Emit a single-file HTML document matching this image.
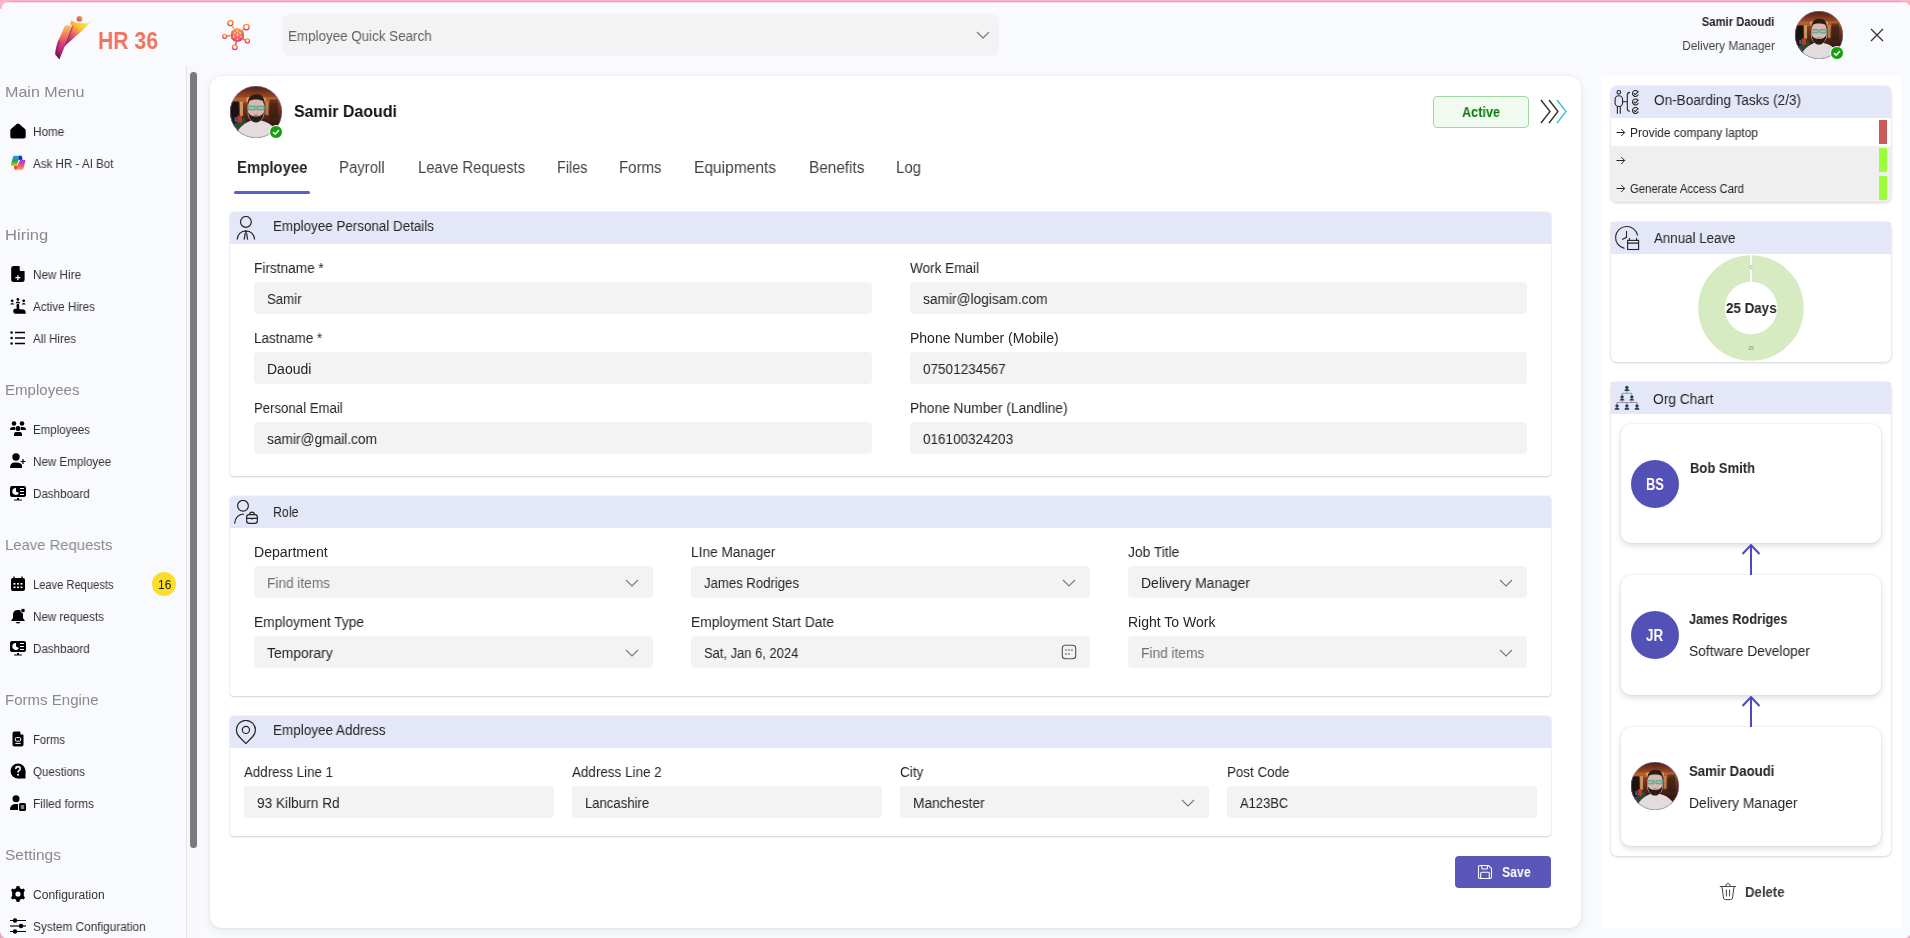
<!DOCTYPE html><html><head><meta charset="utf-8"><style>
*{box-sizing:border-box;margin:0;padding:0}
html,body{width:1910px;height:938px;overflow:hidden;background:#f9fafe;font-family:"Liberation Sans",sans-serif}
.a{position:absolute}
.t{position:absolute;white-space:nowrap;will-change:transform}

#t0{transform:scaleX(0.8819)}
#t1{transform:scaleX(0.9561)}
#t2{transform:scaleX(0.9385)}
#t3{transform:scaleX(0.9867)}
#t4{transform:scaleX(1.0714)}
#t5{transform:scaleX(1.1049)}
#t6{transform:scaleX(1.0027)}
#t7{transform:scaleX(0.9898)}
#t8{transform:scaleX(1.0024)}
#t9{transform:scaleX(1.0313)}
#t10{transform:scaleX(0.9776)}
#t11{transform:scaleX(0.9657)}
#t12{transform:scaleX(0.9728)}
#t13{transform:scaleX(0.9685)}
#t14{transform:scaleX(0.9626)}
#t15{transform:scaleX(0.9600)}
#t16{transform:scaleX(0.9690)}
#t17{transform:scaleX(0.9673)}
#t18{transform:scaleX(0.9281)}
#t19{transform:scaleX(0.9676)}
#t20{transform:scaleX(0.9673)}
#t21{transform:scaleX(0.9412)}
#t22{transform:scaleX(0.9624)}
#t23{transform:scaleX(0.9836)}
#t24{transform:scaleX(1.0043)}
#t25{transform:scaleX(0.9831)}
#t26{transform:scaleX(0.9731)}
#t27{transform:scaleX(0.9398)}
#t28{transform:scaleX(0.9041)}
#t29{transform:scaleX(0.9313)}
#t30{transform:scaleX(0.9344)}
#t31{transform:scaleX(0.9253)}
#t32{transform:scaleX(0.8999)}
#t33{transform:scaleX(0.9376)}
#t34{transform:scaleX(0.9704)}
#t35{transform:scaleX(0.9600)}
#t36{transform:scaleX(0.9362)}
#t37{transform:scaleX(0.9578)}
#t38{transform:scaleX(0.9752)}
#t39{transform:scaleX(0.9463)}
#t40{transform:scaleX(0.9643)}
#t41{transform:scaleX(0.9961)}
#t42{transform:scaleX(0.9410)}
#t43{transform:scaleX(0.9801)}
#t44{transform:scaleX(0.9676)}
#t45{transform:scaleX(0.9810)}
#t46{transform:scaleX(0.9992)}
#t47{transform:scaleX(0.9667)}
#t48{transform:scaleX(0.9830)}
#t49{transform:scaleX(0.9643)}
#t50{transform:scaleX(0.8855)}
#t51{transform:scaleX(1.0074)}
#t52{transform:scaleX(0.9756)}
#t53{transform:scaleX(0.9768)}
#t54{transform:scaleX(0.9391)}
#t55{transform:scaleX(0.9858)}
#t56{transform:scaleX(0.9934)}
#t57{transform:scaleX(0.9839)}
#t58{transform:scaleX(0.9918)}
#t59{transform:scaleX(0.9880)}
#t60{transform:scaleX(0.9248)}
#t61{transform:scaleX(0.9988)}
#t62{transform:scaleX(0.9802)}
#t63{transform:scaleX(0.9637)}
#t64{transform:scaleX(0.9528)}
#t65{transform:scaleX(0.9737)}
#t66{transform:scaleX(0.9603)}
#t67{transform:scaleX(0.9358)}
#t68{transform:scaleX(0.9699)}
#t69{transform:scaleX(0.9787)}
#t70{transform:scaleX(0.9560)}
#t71{transform:scaleX(0.9241)}
#t72{transform:scaleX(0.8776)}
#t73{transform:scaleX(0.9704)}
#t74{transform:scaleX(0.9942)}
#t75{transform:scaleX(0.9442)}
#t76{transform:scaleX(0.9517)}
#t77{transform:scaleX(0.9558)}
#t78{transform:scaleX(0.9842)}
#t79{transform:scaleX(0.8006)}
#t80{transform:scaleX(0.9286)}
#t81{transform:scaleX(0.8312)}
#t82{transform:scaleX(0.9106)}
#t83{transform:scaleX(0.9841)}
#t84{transform:scaleX(0.9474)}
#t85{transform:scaleX(0.9889)}
#t86{transform:scaleX(0.9398)}
</style></head><body>
<div class="a" style="left:0;top:0;width:1910px;height:3px;background:linear-gradient(to bottom,#ffb3c9 0,#ffb3c9 1.4px,#dc9cb2 1.4px,#f2c6d6 2.4px,transparent 2.6px)"></div>
<svg class="a" style="left:0;top:0" width="10" height="10"><path d="M0 0 L10 0 L10 1.5 Q2 1.5 1.5 9 L0 9Z" fill="#ffb3c9"/></svg>
<svg class="a" style="left:1906px;top:934px" width="4" height="4"><path d="M4 0 L4 4 L0 4 Q2.5 3.5 4 1Z" fill="#e8a0b8"/></svg>
<svg class="a" style="left:0;top:926px" width="8" height="12"><path d="M0 6 Q1.5 10 4.5 12 L0 12Z" fill="#f0a8c0"/></svg>
<svg class="a" style="left:1900px;top:0" width="10" height="10"><path d="M10 0 L0 0 L0 1.5 Q8 1.5 8.5 5 L10 5Z" fill="#ffb3c9"/></svg>
<svg class="a" style="left:52px;top:14px;" width="42" height="50" viewBox="0 0 42 50"><defs><linearGradient id="lg1" gradientUnits="userSpaceOnUse" x1="10" y1="11" x2="8" y2="46"><stop offset="0" stop-color="#f9c46a"/><stop offset="0.3" stop-color="#f17a52"/><stop offset="0.5" stop-color="#e5407a"/><stop offset="0.75" stop-color="#b02878"/><stop offset="1" stop-color="#5e1452"/></linearGradient>
<linearGradient id="lg2" gradientUnits="userSpaceOnUse" x1="37" y1="8" x2="14" y2="31"><stop offset="0" stop-color="#fdf23a"/><stop offset="0.35" stop-color="#fbbf30"/><stop offset="0.65" stop-color="#e85072"/><stop offset="1" stop-color="#8a1a68"/></linearGradient>
<linearGradient id="lg3" x1="1" y1="0" x2="0" y2="1"><stop offset="0" stop-color="#f8b030"/><stop offset="1" stop-color="#d83080"/></linearGradient></defs>
<path d="M18.1 10.1 L19.5 5.9 C22 8.5 28 10 37.9 8.8 C33 14 28 19 12.8 32 L20.3 12 Z" fill="url(#lg2)"/>
<path d="M7.5 45.6 L3.2 40.5 C3.5 34 6 26 13.3 11.2 L20.3 12 C17 20 14.5 26 12.8 32 C11 37 9 41 7.5 45.6 Z" fill="url(#lg1)"/>
<path d="M3.2 40.5 C3.5 34 5 29 6.5 25 L8 28 C6.5 33 5.5 38 7.5 45.6Z" fill="#5a1048" opacity=".35"/>
<path d="M20.5 12.5 L12.8 32" stroke="#5a1040" stroke-width=".8" opacity=".8"/>
<circle cx="27.5" cy="4.8" r="2.9" fill="url(#lg3)"/></svg>
<div class="t" id="t0" style="left:98px;top:28.68px;font-size:24px;line-height:24px;font-weight:700;color:#f0735f;transform-origin:left center;">HR 36</div>
<svg class="a" style="left:218px;top:16px;" width="38" height="38" viewBox="0 0 38 38"><defs><linearGradient id="ai1" x1="0" y1="0" x2="0" y2="1"><stop offset="0" stop-color="#f4a030"/><stop offset="1" stop-color="#e8306a"/></linearGradient></defs>
<g fill="none" stroke="url(#ai1)" stroke-width="1.3"><circle cx="12.4" cy="7.1" r="2.6"/><circle cx="28.4" cy="11.1" r="2.7"/><circle cx="6.7" cy="20.3" r="2"/><circle cx="29.4" cy="24.9" r="2"/><circle cx="16.8" cy="31.2" r="2.3"/>
<path d="M14 9.5 L16 13 M26.3 13 L24 14.5 M8.7 20.1 L12.5 19.6 M27.5 24.3 L25.3 23.2 M17.6 28.9 L18.2 25.8"/></g>
<path d="M19.4 12 L22.5 13.3 L25.6 15.5 L26.2 19 L25.6 22.5 L23 25 L19.4 26 L15.8 25 L13.2 22.5 L12.6 19 L13.2 15.5 L16.3 13.3Z" fill="url(#ai1)"/>
<g fill="#fde8e8" opacity=".85"><circle cx="19.4" cy="14.5" r=".7"/><circle cx="16.5" cy="17" r=".7"/><circle cx="22.3" cy="17" r=".7"/><circle cx="19.4" cy="19" r=".7"/><circle cx="15.5" cy="21" r=".7"/><circle cx="23.3" cy="21" r=".7"/><circle cx="19.4" cy="23.5" r=".7"/></g>
<path d="M16.5 17 L19.4 19 L22.3 17 M15.5 21 L19.4 19 L23.3 21 M19.4 14.5 L19.4 23.5 M16.5 17 L15.5 21 L19.4 23.5 L23.3 21 L22.3 17 L19.4 14.5Z" fill="none" stroke="#fde8e8" stroke-width=".5" opacity=".7"/></svg>
<div class="a" style="left:282px;top:14px;width:717px;height:42px;background:#f3f3f3;border-radius:8px"></div>
<div class="t" id="t1" style="left:288px;top:29.45px;font-size:14px;line-height:14px;font-weight:400;color:#616161;transform-origin:left center;">Employee Quick Search</div>
<svg class="a" style="left:976px;top:31px;" width="14" height="9" viewBox="0 0 14 9"><path d="M1 1 L7 7 L13 1" fill="none" stroke="#808080" stroke-width="1.3"/></svg>
<div class="t" id="t2" style="right:135.5999999999999px;top:15.74px;font-size:12px;line-height:12px;font-weight:700;color:#242424;transform-origin:right center;">Samir Daoudi</div>
<div class="t" id="t3" style="right:135.29999999999995px;top:39.84px;font-size:12px;line-height:12px;font-weight:400;color:#424242;transform-origin:right center;">Delivery Manager</div>
<svg class="a" style="left:1795px;top:11px;" width="48" height="48" viewBox="0 0 100 100"><defs><clipPath id="cph"><circle cx="50" cy="50" r="50"/></clipPath>
<linearGradient id="bgh" x1="0" y1="0" x2="0" y2="1"><stop offset="0" stop-color="#4a1c14"/><stop offset="0.22" stop-color="#a04a22"/><stop offset="0.4" stop-color="#7a3418"/><stop offset="0.7" stop-color="#3a1a12"/><stop offset="1" stop-color="#2a1410"/></linearGradient></defs>
<g clip-path="url(#cph)"><rect width="100" height="100" fill="url(#bgh)"/>
<rect x="0" y="22" width="100" height="10" fill="#d08040" opacity=".45"/>
<rect x="0" y="30" width="17" height="60" fill="#1e1210"/><rect x="19" y="30" width="6" height="28" fill="#f0c080" opacity=".7"/><rect x="68" y="30" width="6" height="26" fill="#e8b070" opacity=".6"/><rect x="76" y="26" width="16" height="36" fill="#2a1a12" opacity=".6"/><circle cx="36" cy="26" r="5" fill="#f8d890" opacity=".5"/><circle cx="64" cy="26" r="5" fill="#f8d890" opacity=".5"/>
<path d="M4 76 L28 60 L36 84 L12 98Z" fill="#2a4834"/><rect x="14" y="57" width="9" height="13" fill="#c03a22"/><rect x="9" y="60" width="4" height="9" fill="#3a6a9a"/>
<path d="M10 100 C14 80 30 70 42 66 L58 66 C72 69 88 76 94 100Z" fill="#e2dcdc"/>
<path d="M34 38 C34 26 40 22 50 22 C60 22 66 26 66 38 L66 52 C66 62 58 70 50 70 C42 70 34 62 34 52Z" fill="#d9b8ae"/>
<path d="M34.5 38 C33 21 42 16 51 16 C61 16 68 22 66 38 L63.5 29 C58 25 42 25 37 29Z" fill="#2a1c18"/>
<path d="M35 50 C35 62 42 70 50 70 C58 70 65 62 65 50 C63 56 57 58.5 50 58.5 C43 58.5 37 56 35 50Z" fill="#2a1c18"/>
<path d="M34 39 L48 39 L48 45.5 L35 45.5Z M52 39 L66 39 L65 45.5 L52 45.5Z" fill="#5ab8a0" fill-opacity=".3" stroke="#3aa890" stroke-width="2"/>
<ellipse cx="50" cy="56" rx="5" ry="1.5" fill="#b87878"/>
</g><circle cx="50" cy="50" r="49.3" fill="none" stroke="#8a80d0" stroke-width="1"/></svg>
<svg class="a" style="left:1830px;top:46px;" width="14" height="14" viewBox="0 0 14 14"><circle cx="7" cy="7" r="6.5" fill="#13a10e" stroke="#fff" stroke-width="1"/><path d="M4 7.2 L6.2 9.2 L10 5" fill="none" stroke="#fff" stroke-width="1.6"/></svg>
<svg class="a" style="left:1870px;top:28px;" width="14" height="14" viewBox="0 0 14 14"><path d="M1 1 L13 13 M13 1 L1 13" stroke="#333" stroke-width="1.3"/></svg>
<div class="a" style="left:186px;top:66px;width:14px;height:872px;background:#f8f8f8;border-left:1px solid #e4e4e4"></div>
<div class="a" style="left:190px;top:72px;width:7px;height:776px;background:#7a7a7a;border-radius:4px"></div>
<div class="t" id="t4" style="left:5px;top:84.10px;font-size:15px;line-height:15px;font-weight:400;color:#8a8a8a;transform-origin:left center;">Main Menu</div>
<div class="t" id="t5" style="left:5px;top:227.40px;font-size:15px;line-height:15px;font-weight:400;color:#8a8a8a;transform-origin:left center;">Hiring</div>
<div class="t" id="t6" style="left:5px;top:382.30px;font-size:15px;line-height:15px;font-weight:400;color:#8a8a8a;transform-origin:left center;">Employees</div>
<div class="t" id="t7" style="left:5px;top:537.20px;font-size:15px;line-height:15px;font-weight:400;color:#8a8a8a;transform-origin:left center;">Leave Requests</div>
<div class="t" id="t8" style="left:5px;top:692.30px;font-size:15px;line-height:15px;font-weight:400;color:#8a8a8a;transform-origin:left center;">Forms Engine</div>
<div class="t" id="t9" style="left:5px;top:847.00px;font-size:15px;line-height:15px;font-weight:400;color:#8a8a8a;transform-origin:left center;">Settings</div>
<div class="t" id="t10" style="left:32.5px;top:125.84px;font-size:12px;line-height:12px;font-weight:400;color:#333333;transform-origin:left center;">Home</div>
<svg class="a" style="left:10px;top:123px;fill:#000" width="16" height="16" viewBox="0 0 16 16"><path d="M8 0.6 Q8.7 0.6 9.3 1.1 L15 5.9 Q15.7 6.5 15.7 7.4 L15.7 13.8 Q15.7 15.6 13.9 15.6 L2.1 15.6 Q0.3 15.6 0.3 13.8 L0.3 7.4 Q0.3 6.5 1 5.9 L6.7 1.1 Q7.3 0.6 8 0.6Z" fill="#000"/></svg>
<div class="t" id="t11" style="left:32.5px;top:157.84px;font-size:12px;line-height:12px;font-weight:400;color:#333333;transform-origin:left center;">Ask HR - AI Bot</div>
<svg class="a" style="left:10px;top:155px;fill:#000" width="16" height="16" viewBox="0 0 16 16"><defs><linearGradient id="cpl1" x1="0" y1="0" x2="0" y2="1"><stop offset="0" stop-color="#2a98f0"/><stop offset="0.55" stop-color="#28a050"/><stop offset="1" stop-color="#f0c818"/></linearGradient><linearGradient id="cpl2" x1="0" y1="0" x2="0" y2="1"><stop offset="0" stop-color="#9a3ee0"/><stop offset="0.5" stop-color="#e84a80"/><stop offset="1" stop-color="#f8a050"/></linearGradient></defs><path d="M4 0.8 L10.5 0.8 Q11.6 0.8 12 2 L12.4 4.8 L8.6 4.8 L6.6 10.9 L1.6 10.9 Q0.7 10.9 0.9 10 L3 2 Q3.3 0.8 4 0.8Z" fill="url(#cpl1)"/><path d="M9 0.8 L10.5 0.8 Q11.6 0.8 12 2 L12.4 4.8 L8.6 4.8Z" fill="#2424c8"/><path d="M10 5 L14.6 5 Q15.6 5 15.4 6 L13.3 14 Q13 14.8 12 14.8 L5.6 14.8 Q4.8 14.8 4.6 14 L4 10.9 L7.2 10.9 Z" fill="url(#cpl2)"/><path d="M4 10.9 L7.2 10.9 L6.2 14.8 L5.6 14.8 Q4.8 14.8 4.6 14Z" fill="#f04a20"/></svg>
<div class="t" id="t12" style="left:32.5px;top:268.84px;font-size:12px;line-height:12px;font-weight:400;color:#333333;transform-origin:left center;">New Hire</div>
<svg class="a" style="left:10px;top:266px;fill:#000" width="16" height="16" viewBox="0 0 16 16"><path d="M3.7 0 L9.2 0 L14.6 5.4 L14.6 13.4 Q14.6 15.9 12.1 15.9 L3.7 15.9 Q1.2 15.9 1.2 13.4 L1.2 2.5 Q1.2 0 3.7 0Z" fill="#000"/><path d="M9.7 0.3 L9.7 3.4 Q9.7 4.9 11.2 4.9 L14.3 4.9Z" fill="#fff"/><path d="M7.9 9.2 L7.9 14.2 M5.4 11.7 L10.4 11.7" stroke="#fff" stroke-width="1.3"/></svg>
<div class="t" id="t13" style="left:32.5px;top:300.84px;font-size:12px;line-height:12px;font-weight:400;color:#333333;transform-origin:left center;">Active Hires</div>
<svg class="a" style="left:10px;top:298px;fill:#000" width="16" height="16" viewBox="0 0 16 16"><circle cx="2.2" cy="2.8" r="1.4"/><circle cx="7.9" cy="1.4" r="1.4"/><circle cx="13.7" cy="2.8" r="1.4"/><path d="M0.3 6.6 Q0.3 4.9 2.2 4.9 Q4.1 4.9 4.1 6.6Z M11.8 6.6 Q11.8 4.9 13.7 4.9 Q15.6 4.9 15.6 6.6Z M5.6 5.2 Q5.6 3.5 7.9 3.5 Q10.2 3.5 10.2 5.2Z"/><rect x="6.7" y="5.6" width="2.4" height="7.5" rx="1.2" stroke="#f9fafe" stroke-width=".6"/><path d="M3.3 12.6 Q3.3 10.8 5.2 10.8 L13.5 11.6 Q15.6 12 15.6 14 L15.6 15.8 L5.5 15.8 Q3.3 15.8 3.3 13.6Z"/><rect x="6.7" y="6" width="2.4" height="7" rx="1.2"/></svg>
<div class="t" id="t14" style="left:32.5px;top:332.84px;font-size:12px;line-height:12px;font-weight:400;color:#333333;transform-origin:left center;">All Hires</div>
<svg class="a" style="left:10px;top:330px;fill:#000" width="16" height="16" viewBox="0 0 16 16"><circle cx="1.6" cy="2.5" r="1.3"/><circle cx="1.6" cy="8" r="1.3"/><circle cx="1.6" cy="13.5" r="1.3"/><path d="M5 2.5 L15 2.5 M5 8 L15 8 M5 13.5 L15 13.5" stroke="#000" stroke-width="1.4"/></svg>
<div class="t" id="t15" style="left:32.5px;top:423.84px;font-size:12px;line-height:12px;font-weight:400;color:#333333;transform-origin:left center;">Employees</div>
<svg class="a" style="left:10px;top:421px;fill:#000" width="16" height="16" viewBox="0 0 16 16"><circle cx="4" cy="2.5" r="2.3"/><circle cx="12" cy="2.5" r="2.3"/><circle cx="8" cy="7.5" r="2.5"/><path d="M0 9 Q0 6 3 6 L5 6 L5 9Z M11 6 L13 6 Q16 6 16 9 L11 9Z"/><path d="M4 15 L4 13 Q4 11 6 11 L10 11 Q12 11 12 13 L12 15Z"/></svg>
<div class="t" id="t16" style="left:32.5px;top:455.84px;font-size:12px;line-height:12px;font-weight:400;color:#333333;transform-origin:left center;">New Employee</div>
<svg class="a" style="left:10px;top:453px;fill:#000" width="16" height="16" viewBox="0 0 16 16"><circle cx="6" cy="4" r="3.7"/><path d="M0 15 Q0 10 4 9.5 L8 9.5 Q11 10 12 12 L12 15Z"/><path d="M13 6 L13 11 M10.5 8.5 L15.5 8.5" stroke="#000" stroke-width="1.2"/></svg>
<div class="t" id="t17" style="left:32.5px;top:487.84px;font-size:12px;line-height:12px;font-weight:400;color:#333333;transform-origin:left center;">Dashboard</div>
<svg class="a" style="left:10px;top:485px;fill:#000" width="16" height="16" viewBox="0 0 16 16"><rect x="0" y="1" width="16" height="11" rx="2"/><path d="M7 13 L9 13 L9 14.5 L12 14.5 L12 15.5 L4 15.5 L4 14.5 L7 14.5Z"/><path d="M6 3 A3.5 3.5 0 1 0 9 8 L6 6.5Z" fill="#fff"/><path d="M10 3.5 L14 3.5 M10 6.5 L14 6.5 M10 9.5 L14 9.5" stroke="#fff" stroke-width="1.2"/></svg>
<div class="t" id="t18" style="left:32.5px;top:578.84px;font-size:12px;line-height:12px;font-weight:400;color:#333333;transform-origin:left center;">Leave Requests</div>
<svg class="a" style="left:10px;top:576px;fill:#000" width="16" height="16" viewBox="0 0 16 16"><rect x="1" y="2" width="14" height="13" rx="2"/><path d="M4 0.5 L4 3 M12 0.5 L12 3" stroke="#000" stroke-width="1.4"/><g fill="#fff"><rect x="3.5" y="7" width="2" height="1.6"/><rect x="7" y="7" width="2" height="1.6"/><rect x="10.5" y="7" width="2" height="1.6"/><rect x="3.5" y="10.5" width="2" height="1.6"/><rect x="7" y="10.5" width="2" height="1.6"/><rect x="10.5" y="10.5" width="2" height="1.6"/></g></svg>
<div class="t" id="t19" style="left:32.5px;top:610.84px;font-size:12px;line-height:12px;font-weight:400;color:#333333;transform-origin:left center;">New requests</div>
<svg class="a" style="left:10px;top:608px;fill:#000" width="16" height="16" viewBox="0 0 16 16"><path d="M8 2 Q3 2 3 7 L3 10 L1 13 L15 13 L13 10 L13 7 Q13 2 8 2Z"/><path d="M5.5 14 Q8 17 10.5 14Z"/><circle cx="13" cy="2.5" r="2.2" stroke="#f9f9fe" stroke-width="0.8"/></svg>
<div class="t" id="t20" style="left:32.5px;top:642.84px;font-size:12px;line-height:12px;font-weight:400;color:#333333;transform-origin:left center;">Dashbaord</div>
<svg class="a" style="left:10px;top:640px;fill:#000" width="16" height="16" viewBox="0 0 16 16"><rect x="0" y="1" width="16" height="11" rx="2"/><path d="M7 13 L9 13 L9 14.5 L12 14.5 L12 15.5 L4 15.5 L4 14.5 L7 14.5Z"/><path d="M6 3 A3.5 3.5 0 1 0 9 8 L6 6.5Z" fill="#fff"/><path d="M10 3.5 L14 3.5 M10 6.5 L14 6.5 M10 9.5 L14 9.5" stroke="#fff" stroke-width="1.2"/></svg>
<div class="t" id="t21" style="left:32.5px;top:733.84px;font-size:12px;line-height:12px;font-weight:400;color:#333333;transform-origin:left center;">Forms</div>
<svg class="a" style="left:10px;top:731px;fill:#000" width="16" height="16" viewBox="0 0 16 16"><path d="M4.5 0.5 L10 0.5 L13.5 4 L13.5 13.5 Q13.5 15.5 11.5 15.5 L4.5 15.5 Q2.5 15.5 2.5 13.5 L2.5 2.5 Q2.5 0.5 4.5 0.5Z"/><path d="M10.4 0.6 L10.4 2.6 Q10.4 3.6 11.4 3.6 L13.4 3.6Z" fill="#fff"/><rect x="5.3" y="6.6" width="5.4" height="3.6" rx="1.2" fill="none" stroke="#fff" stroke-width="1"/><path d="M5.3 12.4 L10.7 12.4" stroke="#fff" stroke-width="1"/></svg>
<div class="t" id="t22" style="left:32.5px;top:765.84px;font-size:12px;line-height:12px;font-weight:400;color:#333333;transform-origin:left center;">Questions</div>
<svg class="a" style="left:10px;top:763px;fill:#000" width="16" height="16" viewBox="0 0 16 16"><circle cx="8" cy="8" r="7.5"/><rect x="8" y="8" width="7.5" height="7.5"/><path d="M5.8 6 Q5.8 3.6 8 3.6 Q10.2 3.6 10.2 5.7 Q10.2 7 8.8 7.7 Q8 8.2 8 9.5" fill="none" stroke="#fff" stroke-width="1.6"/><circle cx="8" cy="11.8" r="1" fill="#fff"/></svg>
<div class="t" id="t23" style="left:32.5px;top:797.84px;font-size:12px;line-height:12px;font-weight:400;color:#333333;transform-origin:left center;">Filled forms</div>
<svg class="a" style="left:10px;top:795px;fill:#000" width="16" height="16" viewBox="0 0 16 16"><circle cx="6" cy="3.8" r="3.5"/><path d="M0 15 Q0 9.5 5 9 L8 9 L8 15Z"/><rect x="9" y="8" width="7" height="8" rx="1.5"/><path d="M10.8 11 L14.2 11 M10.8 13 L14.2 13" stroke="#fff" stroke-width="1"/></svg>
<div class="t" id="t24" style="left:32.5px;top:888.84px;font-size:12px;line-height:12px;font-weight:400;color:#333333;transform-origin:left center;">Configuration</div>
<svg class="a" style="left:10px;top:886px;fill:#000" width="16" height="16" viewBox="0 0 16 16"><path d="M8 0 L9.5 0.3 L10 2.2 L11.8 3.2 L13.7 2.6 L15 4.5 L13.8 6 L13.8 10 L15 11.5 L13.7 13.4 L11.8 12.8 L10 13.8 L9.5 15.7 L8 16 L6.5 15.7 L6 13.8 L4.2 12.8 L2.3 13.4 L1 11.5 L2.2 10 L2.2 6 L1 4.5 L2.3 2.6 L4.2 3.2 L6 2.2 L6.5 0.3Z"/><circle cx="8" cy="8" r="2.6" fill="#fff"/></svg>
<div class="t" id="t25" style="left:32.5px;top:920.84px;font-size:12px;line-height:12px;font-weight:400;color:#333333;transform-origin:left center;">System Configuration</div>
<svg class="a" style="left:10px;top:918px;fill:#000" width="16" height="16" viewBox="0 0 16 16"><path d="M0 2.5 L16 2.5 M0 13.5 L16 13.5" stroke="#000" stroke-width="1.2"/><path d="M0 8 L16 8" stroke="#444" stroke-width="1.6"/><circle cx="5" cy="2.5" r="2.2"/><circle cx="11" cy="8" r="2.2"/><circle cx="5" cy="13.5" r="2.2"/></svg>
<div class="a" style="left:152px;top:572px;width:24px;height:24px;background:#fade2a;border-radius:50%"></div>
<div class="t" id="t26" style="left:157.5px;top:578.84px;font-size:12px;line-height:12px;font-weight:400;color:#242424;transform-origin:left center;">16</div>
<div class="a" style="left:210px;top:76px;width:1371px;height:852px;background:#fff;border-radius:12px;box-shadow:0 0 2px rgba(0,0,0,.10),0 3px 10px rgba(0,0,0,.08)"></div>
<svg class="a" style="left:230px;top:86px;" width="52" height="52" viewBox="0 0 100 100"><defs><clipPath id="cpm"><circle cx="50" cy="50" r="50"/></clipPath>
<linearGradient id="bgm" x1="0" y1="0" x2="0" y2="1"><stop offset="0" stop-color="#4a1c14"/><stop offset="0.22" stop-color="#a04a22"/><stop offset="0.4" stop-color="#7a3418"/><stop offset="0.7" stop-color="#3a1a12"/><stop offset="1" stop-color="#2a1410"/></linearGradient></defs>
<g clip-path="url(#cpm)"><rect width="100" height="100" fill="url(#bgm)"/>
<rect x="0" y="22" width="100" height="10" fill="#d08040" opacity=".45"/>
<rect x="0" y="30" width="17" height="60" fill="#1e1210"/><rect x="19" y="30" width="6" height="28" fill="#f0c080" opacity=".7"/><rect x="68" y="30" width="6" height="26" fill="#e8b070" opacity=".6"/><rect x="76" y="26" width="16" height="36" fill="#2a1a12" opacity=".6"/><circle cx="36" cy="26" r="5" fill="#f8d890" opacity=".5"/><circle cx="64" cy="26" r="5" fill="#f8d890" opacity=".5"/>
<path d="M4 76 L28 60 L36 84 L12 98Z" fill="#2a4834"/><rect x="14" y="57" width="9" height="13" fill="#c03a22"/><rect x="9" y="60" width="4" height="9" fill="#3a6a9a"/>
<path d="M10 100 C14 80 30 70 42 66 L58 66 C72 69 88 76 94 100Z" fill="#e2dcdc"/>
<path d="M34 38 C34 26 40 22 50 22 C60 22 66 26 66 38 L66 52 C66 62 58 70 50 70 C42 70 34 62 34 52Z" fill="#d9b8ae"/>
<path d="M34.5 38 C33 21 42 16 51 16 C61 16 68 22 66 38 L63.5 29 C58 25 42 25 37 29Z" fill="#2a1c18"/>
<path d="M35 50 C35 62 42 70 50 70 C58 70 65 62 65 50 C63 56 57 58.5 50 58.5 C43 58.5 37 56 35 50Z" fill="#2a1c18"/>
<path d="M34 39 L48 39 L48 45.5 L35 45.5Z M52 39 L66 39 L65 45.5 L52 45.5Z" fill="#5ab8a0" fill-opacity=".3" stroke="#3aa890" stroke-width="2"/>
<ellipse cx="50" cy="56" rx="5" ry="1.5" fill="#b87878"/>
</g><circle cx="50" cy="50" r="49.3" fill="none" stroke="#8a80d0" stroke-width="1"/></svg>
<svg class="a" style="left:269px;top:125px;" width="14" height="14" viewBox="0 0 14 14"><circle cx="7" cy="7" r="6.5" fill="#13a10e" stroke="#fff" stroke-width="1"/><path d="M4 7.2 L6.2 9.2 L10 5" fill="none" stroke="#fff" stroke-width="1.6"/></svg>
<div class="t" id="t27" style="left:293.6px;top:102.61px;font-size:17px;line-height:17px;font-weight:700;color:#111;transform-origin:left center;">Samir Daoudi</div>
<div class="a" style="left:1433px;top:96px;width:96px;height:32px;background:#f1faf1;border:1px solid #9fd89f;border-radius:4px"></div>
<div class="t" id="t28" style="left:1462px;top:105.15px;font-size:14px;line-height:14px;font-weight:700;color:#107c10;transform-origin:left center;">Active</div>
<svg class="a" style="left:1539px;top:99px;" width="30" height="26" viewBox="0 0 30 26"><path d="M2 1 L11 12.5 L2 24 M10 1 L19 12.5 L10 24" fill="none" stroke="#333" stroke-width="1.4"/><path d="M18 1 L27 12.5 L18 24" fill="none" stroke="#3ac0d0" stroke-width="1.4"/></svg>
<div class="t" id="t29" style="left:237.3px;top:159.96px;font-size:16px;line-height:16px;font-weight:700;color:#242424;transform-origin:left center;">Employee</div>
<div class="t" id="t30" style="left:338.8px;top:159.96px;font-size:16px;line-height:16px;font-weight:400;color:#424242;transform-origin:left center;">Payroll</div>
<div class="t" id="t31" style="left:417.5px;top:159.96px;font-size:16px;line-height:16px;font-weight:400;color:#424242;transform-origin:left center;">Leave Requests</div>
<div class="t" id="t32" style="left:556.8px;top:159.96px;font-size:16px;line-height:16px;font-weight:400;color:#424242;transform-origin:left center;">Files</div>
<div class="t" id="t33" style="left:618.5px;top:159.96px;font-size:16px;line-height:16px;font-weight:400;color:#424242;transform-origin:left center;">Forms</div>
<div class="t" id="t34" style="left:693.5px;top:159.96px;font-size:16px;line-height:16px;font-weight:400;color:#424242;transform-origin:left center;">Equipments</div>
<div class="t" id="t35" style="left:808.5px;top:159.96px;font-size:16px;line-height:16px;font-weight:400;color:#424242;transform-origin:left center;">Benefits</div>
<div class="t" id="t36" style="left:895.5px;top:159.96px;font-size:16px;line-height:16px;font-weight:400;color:#424242;transform-origin:left center;">Log</div>
<div class="a" style="left:234px;top:191px;width:76px;height:3px;background:#5b5fc7;border-radius:2px"></div>
<div class="a" style="left:230px;top:212px;width:1321px;height:264px;background:#fff;border-radius:4px;box-shadow:0 0 2px rgba(0,0,0,.12),0 1px 2px rgba(0,0,0,.14)"></div>
<div class="a" style="left:230px;top:212px;width:1321px;height:32px;background:#e3e7f8;border-radius:4px 4px 0 0"></div>
<div class="t" id="t37" style="left:272.6px;top:219.15px;font-size:14px;line-height:14px;font-weight:400;color:#242424;transform-origin:left center;">Employee Personal Details</div>
<svg class="a" style="left:234px;top:216px;" width="26" height="26" viewBox="0 0 26 26"><g fill="none" stroke="#242424" stroke-width="1.2"><circle cx="11.9" cy="5.9" r="5.4"/><path d="M3.2 23.6 A8.7 8.7 0 0 1 20.6 23.6"/><path d="M11.2 17.2 L10.2 23.6 M12.6 17.2 L13.6 23.6"/></g><path d="M10.4 15 L13.4 15 L11.9 17.8Z" fill="#242424"/></svg>
<div class="t" id="t38" style="left:254px;top:261.15px;font-size:14px;line-height:14px;font-weight:400;color:#242424;transform-origin:left center;">Firstname *</div>
<div class="a" style="left:254px;top:282px;width:618px;height:32px;background:#f3f3f3;border-radius:4px"></div>
<div class="t" id="t39" style="left:267px;top:292.15px;font-size:14px;line-height:14px;font-weight:400;color:#242424;transform-origin:left center;">Samir</div>
<div class="t" id="t40" style="left:254px;top:331.15px;font-size:14px;line-height:14px;font-weight:400;color:#242424;transform-origin:left center;">Lastname *</div>
<div class="a" style="left:254px;top:352px;width:618px;height:32px;background:#f3f3f3;border-radius:4px"></div>
<div class="t" id="t41" style="left:267px;top:362.15px;font-size:14px;line-height:14px;font-weight:400;color:#242424;transform-origin:left center;">Daoudi</div>
<div class="t" id="t42" style="left:254px;top:401.15px;font-size:14px;line-height:14px;font-weight:400;color:#242424;transform-origin:left center;">Personal Email</div>
<div class="a" style="left:254px;top:422px;width:618px;height:32px;background:#f3f3f3;border-radius:4px"></div>
<div class="t" id="t43" style="left:267px;top:432.15px;font-size:14px;line-height:14px;font-weight:400;color:#242424;transform-origin:left center;">samir@gmail.com</div>
<div class="t" id="t44" style="left:910px;top:261.15px;font-size:14px;line-height:14px;font-weight:400;color:#242424;transform-origin:left center;">Work Email</div>
<div class="a" style="left:910px;top:282px;width:617px;height:32px;background:#f3f3f3;border-radius:4px"></div>
<div class="t" id="t45" style="left:923px;top:292.15px;font-size:14px;line-height:14px;font-weight:400;color:#242424;transform-origin:left center;">samir@logisam.com</div>
<div class="t" id="t46" style="left:910px;top:331.15px;font-size:14px;line-height:14px;font-weight:400;color:#242424;transform-origin:left center;">Phone Number (Mobile)</div>
<div class="a" style="left:910px;top:352px;width:617px;height:32px;background:#f3f3f3;border-radius:4px"></div>
<div class="t" id="t47" style="left:923px;top:362.15px;font-size:14px;line-height:14px;font-weight:400;color:#242424;transform-origin:left center;">07501234567</div>
<div class="t" id="t48" style="left:910px;top:401.15px;font-size:14px;line-height:14px;font-weight:400;color:#242424;transform-origin:left center;">Phone Number (Landline)</div>
<div class="a" style="left:910px;top:422px;width:617px;height:32px;background:#f3f3f3;border-radius:4px"></div>
<div class="t" id="t49" style="left:923px;top:432.15px;font-size:14px;line-height:14px;font-weight:400;color:#242424;transform-origin:left center;">016100324203</div>
<div class="a" style="left:230px;top:496px;width:1321px;height:200px;background:#fff;border-radius:4px;box-shadow:0 0 2px rgba(0,0,0,.12),0 1px 2px rgba(0,0,0,.14)"></div>
<div class="a" style="left:230px;top:496px;width:1321px;height:32px;background:#e3e7f8;border-radius:4px 4px 0 0"></div>
<div class="t" id="t50" style="left:272.6px;top:505.15px;font-size:14px;line-height:14px;font-weight:400;color:#242424;transform-origin:left center;">Role</div>
<svg class="a" style="left:234px;top:500px;" width="26" height="26" viewBox="0 0 26 26"><g fill="none" stroke="#242424" stroke-width="1.2"><circle cx="9" cy="5.8" r="5.4"/><path d="M0.6 23.6 Q1.5 14.5 10 14"/><rect x="12.6" y="14.6" width="10.8" height="8.8" rx="2.6"/><path d="M15.6 14.6 Q15.6 12.2 18 12.2 Q20.4 12.2 20.4 14.6 M12.6 18.4 L23.4 18.4"/></g><rect x="17.3" y="18" width="1.4" height="1.6" fill="#242424"/></svg>
<div class="t" id="t51" style="left:254px;top:545.15px;font-size:14px;line-height:14px;font-weight:400;color:#242424;transform-origin:left center;">Department</div>
<div class="a" style="left:254px;top:566px;width:399px;height:32px;background:#f3f3f3;border-radius:4px"></div>
<div class="t" id="t52" style="left:267px;top:576.15px;font-size:14px;line-height:14px;font-weight:400;color:#707070;transform-origin:left center;">Find items</div>
<svg class="a" style="left:625px;top:579px;" width="14" height="9" viewBox="0 0 14 9"><path d="M1 1 L7 7 L13 1" fill="none" stroke="#7a7a7a" stroke-width="1.15"/></svg>
<div class="t" id="t53" style="left:691px;top:545.15px;font-size:14px;line-height:14px;font-weight:400;color:#242424;transform-origin:left center;">LIne Manager</div>
<div class="a" style="left:691px;top:566px;width:399px;height:32px;background:#f3f3f3;border-radius:4px"></div>
<div class="t" id="t54" style="left:704px;top:576.15px;font-size:14px;line-height:14px;font-weight:400;color:#242424;transform-origin:left center;">James Rodriges</div>
<svg class="a" style="left:1062px;top:579px;" width="14" height="9" viewBox="0 0 14 9"><path d="M1 1 L7 7 L13 1" fill="none" stroke="#7a7a7a" stroke-width="1.15"/></svg>
<div class="t" id="t55" style="left:1128px;top:545.15px;font-size:14px;line-height:14px;font-weight:400;color:#242424;transform-origin:left center;">Job Title</div>
<div class="a" style="left:1128px;top:566px;width:399px;height:32px;background:#f3f3f3;border-radius:4px"></div>
<div class="t" id="t56" style="left:1141px;top:576.15px;font-size:14px;line-height:14px;font-weight:400;color:#242424;transform-origin:left center;">Delivery Manager</div>
<svg class="a" style="left:1499px;top:579px;" width="14" height="9" viewBox="0 0 14 9"><path d="M1 1 L7 7 L13 1" fill="none" stroke="#7a7a7a" stroke-width="1.15"/></svg>
<div class="t" id="t57" style="left:254px;top:615.15px;font-size:14px;line-height:14px;font-weight:400;color:#242424;transform-origin:left center;">Employment Type</div>
<div class="a" style="left:254px;top:636px;width:399px;height:32px;background:#f3f3f3;border-radius:4px"></div>
<div class="t" id="t58" style="left:267px;top:646.15px;font-size:14px;line-height:14px;font-weight:400;color:#242424;transform-origin:left center;">Temporary</div>
<svg class="a" style="left:625px;top:649px;" width="14" height="9" viewBox="0 0 14 9"><path d="M1 1 L7 7 L13 1" fill="none" stroke="#7a7a7a" stroke-width="1.15"/></svg>
<div class="t" id="t59" style="left:691px;top:615.15px;font-size:14px;line-height:14px;font-weight:400;color:#242424;transform-origin:left center;">Employment Start Date</div>
<div class="a" style="left:691px;top:636px;width:399px;height:32px;background:#f3f3f3;border-radius:4px"></div>
<div class="t" id="t60" style="left:704px;top:646.15px;font-size:14px;line-height:14px;font-weight:400;color:#242424;transform-origin:left center;">Sat, Jan 6, 2024</div>
<svg class="a" style="left:1061px;top:644px;" width="16" height="16" viewBox="0 0 16 16"><rect x="1.3" y="1.3" width="13.4" height="13.4" rx="3" fill="none" stroke="#555" stroke-width="1.1"/><g fill="#888"><rect x="4.1" y="5.2" width="1.7" height="1.7"/><rect x="7.1" y="5.2" width="1.7" height="1.7"/><rect x="10.1" y="5.2" width="1.7" height="1.7"/><rect x="4.1" y="9.1" width="1.7" height="1.7"/><rect x="7.1" y="9.1" width="1.7" height="1.7"/></g></svg>
<div class="t" id="t61" style="left:1128px;top:615.15px;font-size:14px;line-height:14px;font-weight:400;color:#242424;transform-origin:left center;">Right To Work</div>
<div class="a" style="left:1128px;top:636px;width:399px;height:32px;background:#f3f3f3;border-radius:4px"></div>
<div class="t" id="t62" style="left:1141px;top:646.15px;font-size:14px;line-height:14px;font-weight:400;color:#707070;transform-origin:left center;">Find items</div>
<svg class="a" style="left:1499px;top:649px;" width="14" height="9" viewBox="0 0 14 9"><path d="M1 1 L7 7 L13 1" fill="none" stroke="#7a7a7a" stroke-width="1.15"/></svg>
<div class="a" style="left:230px;top:716px;width:1321px;height:120px;background:#fff;border-radius:4px;box-shadow:0 0 2px rgba(0,0,0,.12),0 1px 2px rgba(0,0,0,.14)"></div>
<div class="a" style="left:230px;top:716px;width:1321px;height:32px;background:#e3e7f8;border-radius:4px 4px 0 0"></div>
<div class="t" id="t63" style="left:272.6px;top:723.15px;font-size:14px;line-height:14px;font-weight:400;color:#242424;transform-origin:left center;">Employee Address</div>
<svg class="a" style="left:234px;top:720px;" width="26" height="26" viewBox="0 0 26 26"><g fill="none" stroke="#242424" stroke-width="1.2"><path d="M11.9 23.6 L5.05 16.49 A9.5 9.5 0 1 1 18.75 16.49 Z" stroke-linejoin="round"/><circle cx="11.9" cy="9.9" r="3.6"/></g></svg>
<div class="t" id="t64" style="left:244px;top:765.15px;font-size:14px;line-height:14px;font-weight:400;color:#242424;transform-origin:left center;">Address Line 1</div>
<div class="a" style="left:244px;top:786px;width:310px;height:32px;background:#f3f3f3;border-radius:4px"></div>
<div class="t" id="t65" style="left:257px;top:796.15px;font-size:14px;line-height:14px;font-weight:400;color:#242424;transform-origin:left center;">93 Kilburn Rd</div>
<div class="t" id="t66" style="left:572px;top:765.15px;font-size:14px;line-height:14px;font-weight:400;color:#242424;transform-origin:left center;">Address Line 2</div>
<div class="a" style="left:572px;top:786px;width:310px;height:32px;background:#f3f3f3;border-radius:4px"></div>
<div class="t" id="t67" style="left:585px;top:796.15px;font-size:14px;line-height:14px;font-weight:400;color:#242424;transform-origin:left center;">Lancashire</div>
<div class="t" id="t68" style="left:900px;top:765.15px;font-size:14px;line-height:14px;font-weight:400;color:#242424;transform-origin:left center;">City</div>
<div class="a" style="left:900px;top:786px;width:309px;height:32px;background:#f3f3f3;border-radius:4px"></div>
<div class="t" id="t69" style="left:913px;top:796.15px;font-size:14px;line-height:14px;font-weight:400;color:#242424;transform-origin:left center;">Manchester</div>
<svg class="a" style="left:1181px;top:799px;" width="14" height="9" viewBox="0 0 14 9"><path d="M1 1 L7 7 L13 1" fill="none" stroke="#7a7a7a" stroke-width="1.15"/></svg>
<div class="t" id="t70" style="left:1227px;top:765.15px;font-size:14px;line-height:14px;font-weight:400;color:#242424;transform-origin:left center;">Post Code</div>
<div class="a" style="left:1227px;top:786px;width:310px;height:32px;background:#f3f3f3;border-radius:4px"></div>
<div class="t" id="t71" style="left:1240px;top:796.15px;font-size:14px;line-height:14px;font-weight:400;color:#242424;transform-origin:left center;">A123BC</div>
<div class="a" style="left:1455px;top:856px;width:96px;height:32px;background:#5b57b8;border-radius:4px"></div>
<svg class="a" style="left:1477px;top:864px;" width="16" height="16" viewBox="0 0 16 16"><g fill="none" stroke="#fff" stroke-width="1.1"><path d="M3 1.5 L11.5 1.5 L14.5 4.5 L14.5 13 Q14.5 14.5 13 14.5 L3 14.5 Q1.5 14.5 1.5 13 L1.5 3 Q1.5 1.5 3 1.5Z"/><path d="M4.8 1.5 L4.8 4.2 Q4.8 5 5.6 5 L9.6 5 Q10.4 5 10.4 4.2 L10.4 1.5 M3.7 14.5 L3.7 9.5 Q3.7 8.3 4.9 8.3 L11.1 8.3 Q12.3 8.3 12.3 9.5 L12.3 14.5"/></g></svg>
<div class="t" id="t72" style="left:1501.8px;top:865.15px;font-size:14px;line-height:14px;font-weight:700;color:#fff;transform-origin:left center;">Save</div>
<div class="a" style="left:1601px;top:76px;width:300px;height:852px;background:#ffffff"></div>
<div class="a" style="left:1611px;top:86px;width:280px;height:116px;background:#fff;border-radius:6px;box-shadow:0 0 2px rgba(0,0,0,.12),0 1px 3px rgba(0,0,0,.14);overflow:hidden"></div>
<div class="a" style="left:1611px;top:86px;width:280px;height:32px;background:#e3e7f8;border-radius:6px 6px 0 0"></div>
<div class="a" style="left:1611px;top:146px;width:280px;height:56px;background:#efefef;border-radius:0 0 6px 6px"></div>
<div class="t" id="t73" style="left:1653.8px;top:92.65px;font-size:14px;line-height:14px;font-weight:400;color:#242424;transform-origin:left center;">On-Boarding Tasks (2/3)</div>
<svg class="a" style="left:1614px;top:89px;" width="26" height="27" viewBox="0 0 26 27"><g fill="none" stroke="#242424" stroke-width="1.1"><circle cx="4.8" cy="3.3" r="1.8"/><rect x="1.1" y="6.8" width="7.5" height="10.7" rx="3.6"/><path d="M3.4 17.5 L3.4 24.7 M6.3 17.5 L6.3 24.7 M8.6 12.8 L13.3 12.8 M16 3.4 Q13.3 3.4 13.3 5.8 L13.3 19.8 Q13.3 22.2 16 22.2"/><path d="M23.8 2.5 A3 3 0 1 0 24.3 5.5 M23.8 11 A3 3 0 1 0 24.3 14 M23.8 19.5 A3 3 0 1 0 24.3 22.5"/><path d="M19.8 4.3 L21.2 5.6 L24.5 2.3 M19.8 12.8 L21.2 14.1 L24.5 10.8 M19.8 21.3 L21.2 22.6 L24.5 19.3"/></g></svg>
<svg class="a" style="left:1615.5px;top:128.3px;" width="10" height="9" viewBox="0 0 10 9"><path d="M0.5 4.5 L8.7 4.5 M5.2 1 L8.7 4.5 L5.2 8" fill="none" stroke="#242424" stroke-width="1"/></svg>
<div class="t" id="t74" style="left:1629.5px;top:127.14px;font-size:12px;line-height:12px;font-weight:400;color:#242424;transform-origin:left center;">Provide company laptop</div>
<div class="a" style="left:1879px;top:120.00000000000001px;width:8px;height:23.5px;background:#c85a5a"></div>
<svg class="a" style="left:1615.5px;top:156.3px;" width="10" height="9" viewBox="0 0 10 9"><path d="M0.5 4.5 L8.7 4.5 M5.2 1 L8.7 4.5 L5.2 8" fill="none" stroke="#242424" stroke-width="1"/></svg>
<div class="a" style="left:1879px;top:148.0px;width:8px;height:23.5px;background:#9dff3a"></div>
<svg class="a" style="left:1615.5px;top:184.3px;" width="10" height="9" viewBox="0 0 10 9"><path d="M0.5 4.5 L8.7 4.5 M5.2 1 L8.7 4.5 L5.2 8" fill="none" stroke="#242424" stroke-width="1"/></svg>
<div class="t" id="t75" style="left:1629.5px;top:183.14px;font-size:12px;line-height:12px;font-weight:400;color:#242424;transform-origin:left center;">Generate Access Card</div>
<div class="a" style="left:1879px;top:176.0px;width:8px;height:23.5px;background:#9dff3a"></div>
<div class="a" style="left:1611px;top:222px;width:280px;height:140px;background:#fff;border-radius:6px;box-shadow:0 0 2px rgba(0,0,0,.12),0 1px 3px rgba(0,0,0,.14);overflow:hidden"></div>
<div class="a" style="left:1611px;top:222px;width:280px;height:32px;background:#e3e7f8"></div>
<div class="t" id="t76" style="left:1653.5px;top:231.35px;font-size:14px;line-height:14px;font-weight:400;color:#242424;transform-origin:left center;">Annual Leave</div>
<svg class="a" style="left:1610px;top:220px;" width="40" height="36" viewBox="0 0 40 36"><g fill="none" stroke="#242424" stroke-width="1.1"><path d="M27.6 15.5 A11.1 11.1 0 1 0 14.4 28.4"/><path d="M16.5 11.1 L16.5 17.3 L12.1 19.6"/><rect x="17.6" y="20.4" width="11" height="9.1"/><path d="M17.6 23.1 L28.6 23.1 M19.4 18 L19.4 20.4 M26.6 18 L26.6 20.4"/></g></svg>
<svg class="a" style="left:1698px;top:255px;" width="106" height="106" viewBox="0 0 106 106"><circle cx="53" cy="53" r="39.5" fill="none" stroke="#d6ebc2" stroke-width="26.5"/><rect x="52" y="0" width="2" height="27" fill="#fff"/><text x="53" y="14" font-size="5" fill="#888" text-anchor="middle" font-family="Liberation Sans">0</text><text x="53" y="95" font-size="5" fill="#888" text-anchor="middle" font-family="Liberation Sans">25</text></svg>
<div class="t" id="t77" style="left:1725.6px;top:301.45px;font-size:14px;line-height:14px;font-weight:700;color:#242424;transform-origin:left center;">25 Days</div>
<div class="a" style="left:1611px;top:382px;width:280px;height:474px;background:#fff;border-radius:6px;box-shadow:0 0 2px rgba(0,0,0,.12),0 1px 3px rgba(0,0,0,.14);overflow:hidden"></div>
<div class="a" style="left:1611px;top:382px;width:280px;height:32px;background:#e3e7f8"></div>
<div class="t" id="t78" style="left:1653px;top:391.75px;font-size:14px;line-height:14px;font-weight:400;color:#242424;transform-origin:left center;">Org Chart</div>
<svg class="a" style="left:1610px;top:382px;" width="40" height="32" viewBox="0 0 40 32"><g fill="#1f3d5c"><circle cx="16.9" cy="5.40" r="1.65"/><path d="M14.50 9 Q14.30 7.10 16.9 7.10 Q19.50 7.10 19.30 9Z"/><circle cx="12.1" cy="15.00" r="1.65"/><path d="M9.70 18.5 Q9.50 16.70 12.1 16.70 Q14.70 16.70 14.50 18.5Z"/><circle cx="21.8" cy="15.00" r="1.65"/><path d="M19.40 18.5 Q19.20 16.70 21.8 16.70 Q24.40 16.70 24.20 18.5Z"/><circle cx="7" cy="24.00" r="1.65"/><path d="M4.60 27.7 Q4.40 25.70 7 25.70 Q9.60 25.70 9.40 27.7Z"/><circle cx="16.9" cy="24.00" r="1.65"/><path d="M14.50 27.7 Q14.30 25.70 16.9 25.70 Q19.50 25.70 19.30 27.7Z"/><circle cx="27" cy="24.00" r="1.65"/><path d="M24.60 27.7 Q24.40 25.70 27 25.70 Q29.60 25.70 29.40 27.7Z"/></g><path d="M16.9 9 L16.9 11.3 M12.1 13.4 L12.1 11.3 L21.8 11.3 L21.8 13.4 M12.1 18.5 L12.1 20.5 M21.8 18.5 L21.8 20.5 M16.9 20.5 L16.9 22.4 M7 22.4 L7 20.5 L27 20.5 L27 22.4" stroke="#777" stroke-width="0.7" fill="none"/></svg>
<div class="a" style="left:1621px;top:424px;width:260px;height:119px;background:#fff;border-radius:10px;box-shadow:0 0 2px rgba(0,0,0,.12),0 3px 6px rgba(0,0,0,.13)"></div>
<div class="a" style="left:1621px;top:575px;width:260px;height:120px;background:#fff;border-radius:10px;box-shadow:0 0 2px rgba(0,0,0,.12),0 3px 6px rgba(0,0,0,.13)"></div>
<div class="a" style="left:1621px;top:727px;width:260px;height:119px;background:#fff;border-radius:10px;box-shadow:0 0 2px rgba(0,0,0,.12),0 3px 6px rgba(0,0,0,.13)"></div>
<div class="a" style="left:1631px;top:460px;width:48px;height:48px;background:#5451b6;border-radius:50%"></div>
<div class="t" id="t79" style="left:1645.8px;top:476.96px;font-size:16px;line-height:16px;font-weight:700;color:#fff;transform-origin:left center;">BS</div>
<div class="t" id="t80" style="left:1689.7px;top:461.15px;font-size:14px;line-height:14px;font-weight:700;color:#242424;transform-origin:left center;">Bob Smith</div>
<div class="a" style="left:1631px;top:611px;width:48px;height:48px;background:#5451b6;border-radius:50%"></div>
<div class="t" id="t81" style="left:1646px;top:627.96px;font-size:16px;line-height:16px;font-weight:700;color:#fff;transform-origin:left center;">JR</div>
<div class="t" id="t82" style="left:1689px;top:612.15px;font-size:14px;line-height:14px;font-weight:700;color:#242424;transform-origin:left center;">James Rodriges</div>
<div class="t" id="t83" style="left:1689px;top:644.15px;font-size:14px;line-height:14px;font-weight:400;color:#242424;transform-origin:left center;">Software Developer</div>
<svg class="a" style="left:1631px;top:762px;" width="48" height="48" viewBox="0 0 100 100"><defs><clipPath id="cpo"><circle cx="50" cy="50" r="50"/></clipPath>
<linearGradient id="bgo" x1="0" y1="0" x2="0" y2="1"><stop offset="0" stop-color="#4a1c14"/><stop offset="0.22" stop-color="#a04a22"/><stop offset="0.4" stop-color="#7a3418"/><stop offset="0.7" stop-color="#3a1a12"/><stop offset="1" stop-color="#2a1410"/></linearGradient></defs>
<g clip-path="url(#cpo)"><rect width="100" height="100" fill="url(#bgo)"/>
<rect x="0" y="22" width="100" height="10" fill="#d08040" opacity=".45"/>
<rect x="0" y="30" width="17" height="60" fill="#1e1210"/><rect x="19" y="30" width="6" height="28" fill="#f0c080" opacity=".7"/><rect x="68" y="30" width="6" height="26" fill="#e8b070" opacity=".6"/><rect x="76" y="26" width="16" height="36" fill="#2a1a12" opacity=".6"/><circle cx="36" cy="26" r="5" fill="#f8d890" opacity=".5"/><circle cx="64" cy="26" r="5" fill="#f8d890" opacity=".5"/>
<path d="M4 76 L28 60 L36 84 L12 98Z" fill="#2a4834"/><rect x="14" y="57" width="9" height="13" fill="#c03a22"/><rect x="9" y="60" width="4" height="9" fill="#3a6a9a"/>
<path d="M10 100 C14 80 30 70 42 66 L58 66 C72 69 88 76 94 100Z" fill="#e2dcdc"/>
<path d="M34 38 C34 26 40 22 50 22 C60 22 66 26 66 38 L66 52 C66 62 58 70 50 70 C42 70 34 62 34 52Z" fill="#d9b8ae"/>
<path d="M34.5 38 C33 21 42 16 51 16 C61 16 68 22 66 38 L63.5 29 C58 25 42 25 37 29Z" fill="#2a1c18"/>
<path d="M35 50 C35 62 42 70 50 70 C58 70 65 62 65 50 C63 56 57 58.5 50 58.5 C43 58.5 37 56 35 50Z" fill="#2a1c18"/>
<path d="M34 39 L48 39 L48 45.5 L35 45.5Z M52 39 L66 39 L65 45.5 L52 45.5Z" fill="#5ab8a0" fill-opacity=".3" stroke="#3aa890" stroke-width="2"/>
<ellipse cx="50" cy="56" rx="5" ry="1.5" fill="#b87878"/>
</g><circle cx="50" cy="50" r="49.3" fill="none" stroke="#8a80d0" stroke-width="1"/></svg>
<div class="t" id="t84" style="left:1689px;top:764.15px;font-size:14px;line-height:14px;font-weight:700;color:#242424;transform-origin:left center;">Samir Daoudi</div>
<div class="t" id="t85" style="left:1689px;top:796.15px;font-size:14px;line-height:14px;font-weight:400;color:#242424;transform-origin:left center;">Delivery Manager</div>
<svg class="a" style="left:1741px;top:544px;" width="20" height="31" viewBox="0 0 20 31"><path d="M10 1 L10 31 M1.5 10 L10 1 L18.5 10" fill="none" stroke="#4b48c0" stroke-width="2"/></svg>
<svg class="a" style="left:1741px;top:696px;" width="20" height="31" viewBox="0 0 20 31"><path d="M10 1 L10 31 M1.5 10 L10 1 L18.5 10" fill="none" stroke="#4b48c0" stroke-width="2"/></svg>
<svg class="a" style="left:1719px;top:882px;" width="18" height="19" viewBox="0 0 18 19"><g fill="none" stroke="#444" stroke-width="1" stroke-linecap="round"><path d="M1.2 4.5 L16.5 4.5 M6.5 4.3 Q7 1.5 9 1.5 Q11 1.5 11.5 4.3 M3 4.8 L4.5 16 Q4.8 17.6 6.5 17.6 L11.5 17.6 Q13.2 17.6 13.5 16 L15 4.8 M7.4 8 L7.4 14 M10.6 8 L10.6 14"/></g></svg>
<div class="t" id="t86" style="left:1744.5px;top:885.15px;font-size:14px;line-height:14px;font-weight:700;color:#3a3a3a;transform-origin:left center;">Delete</div>
</body></html>
